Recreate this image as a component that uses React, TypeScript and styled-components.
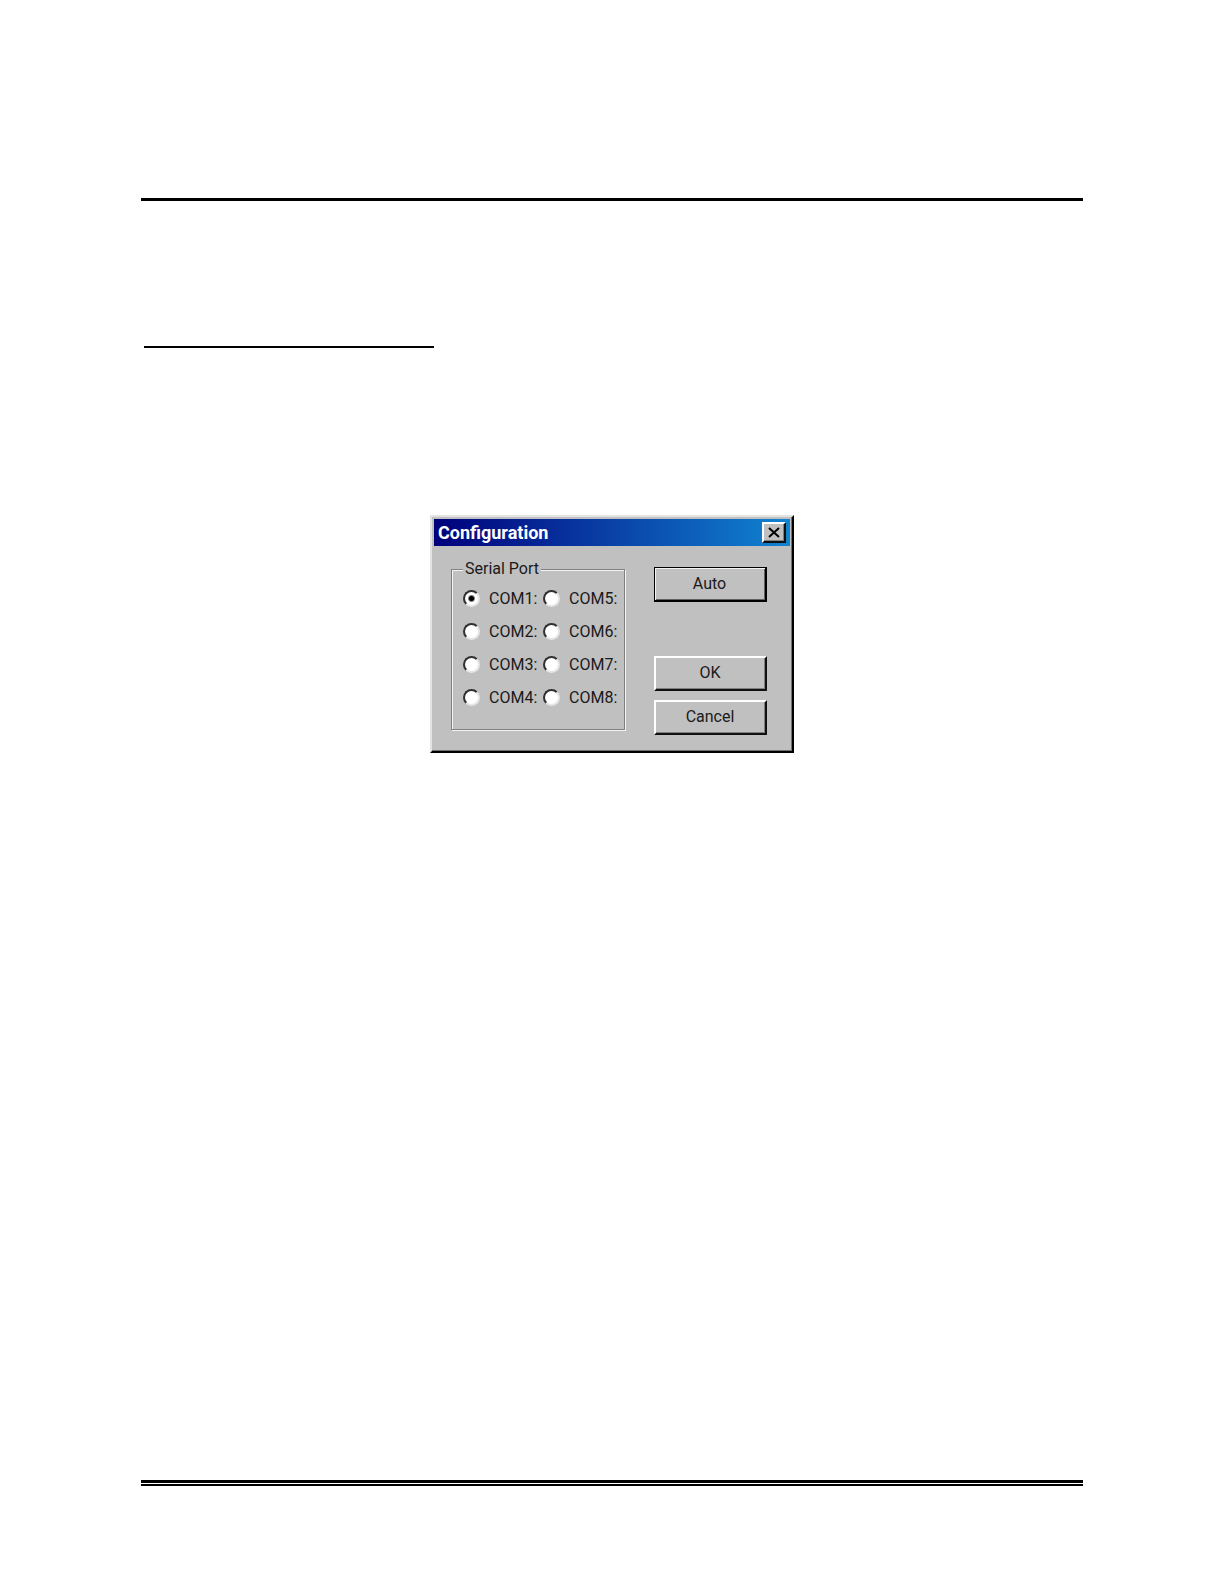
import React, { useState } from "react";
import styled, { createGlobalStyle, css } from "styled-components";

const GlobalStyle = createGlobalStyle`
  *, *::before, *::after { box-sizing: border-box; }
  body {
    margin: 0;
    background: #fff;
    color: #1a1a1a;
    font: 16px/20px Roboto, "Liberation Sans", sans-serif;
  }
`;

const Page = styled.main`
  display: flex;
  flex-direction: column;
  min-height: 100vh;
  padding: 198px 141px 98px;
`;

const HeaderRule = styled.hr`
  width: 100%;
  height: 3px;
  margin: 0 0 145px;
  border: 0;
  background: #000;
`;

const SectionRule = styled.hr`
  width: 290px;
  height: 2px;
  margin: 0 0 167px 3px;
  border: 0;
  background: #000;
`;

const FooterRule = styled.hr`
  width: 100%;
  height: 6px;
  margin: auto 0 0;
  border: solid #000;
  border-width: 3px 0 2px;
`;

const Dialog = styled.section`
  align-self: center;
  width: 364px;
  padding: 2px 1px 1px 2px;
  border: 2px solid;
  border-color: #e4e4e4 #000 #000 #e4e4e4;
  background: #c0c0c0;
  box-shadow: inset -1px -1px #707070;
`;

const TitleBar = styled.header`
  display: flex;
  align-items: center;
  justify-content: space-between;
  height: 27px;
  margin-right: 1px;
  padding: 0 4px;
  background: linear-gradient(90deg, #00007b, #0a48ac 55%, #1084d0);
`;

const Title = styled.h1`
  margin: 0;
  color: #fff;
  font-size: 18px;
  line-height: 20px;
  font-weight: 700;
`;

const raised = css`
  border: 2px solid;
  border-color: #fff #101010 #101010 #fff;
  background: #c0c0c0;
  box-shadow: inset -1px -1px #808080;
`;

const CloseButton = styled.button`
  ${raised}
  display: grid;
  place-items: center;
  width: 24px;
  height: 21px;
  padding: 0 1px 1px 0;
`;

const Body = styled.form`
  display: flex;
  align-items: flex-start;
  gap: 29px;
  padding: 13px 24px 15px 17px;
`;

const PortGroup = styled.fieldset`
  flex: 0 0 174px;
  height: 171px;
  min-width: 0;
  margin: 0;
  padding: 3px 0 0 11px;
  border: 1px solid #808080;
  box-shadow: 1px 1px #f4f4f4, inset 1px 1px #f4f4f4;
`;

const GroupName = styled.legend`
  padding: 0 2px;
  background: #c0c0c0;
`;

const Ports = styled.div`
  display: grid;
  grid-template-columns: repeat(2, 80px);
  grid-template-rows: repeat(4, 33px);
  grid-auto-flow: column;
`;

const Port = styled.label`
  display: flex;
  align-items: center;
  gap: 9px;
`;

const Radio = styled.input`
  appearance: none;
  flex: none;
  width: 17px;
  height: 17px;
  margin: 0;
  border: 2px solid;
  border-color: #303030 #e6e6e6 #e6e6e6 #303030;
  border-radius: 50%;
  background: #fff;

  &:checked {
    background: radial-gradient(circle, #000 0 2px, #fff 4px);
  }
`;

const Actions = styled.div`
  display: flex;
  flex: 1;
  flex-direction: column;
  gap: 9px;
  padding-top: 8px;
`;

const ActionButton = styled.button<{ $primary?: boolean }>`
  ${raised}
  height: 35px;
  padding: 0 1px 1px 0;
  color: inherit;
  font: inherit;
  ${({ $primary }) =>
    $primary &&
    css`
      margin-bottom: 45px;
      padding-bottom: 0;
      border-color: #000;
      box-shadow: inset 1px 1px #f4f4f4, inset -1px -1px #606060;
      border-width: 1px 2px 2px 1px;
    `}
`;

const PORTS = [1, 2, 3, 4, 5, 6, 7, 8].map((n) => `COM${n}:`);

export default function App() {
  const [port, setPort] = useState(PORTS[0]);

  return (
    <>
      <GlobalStyle />
      <Page>
        <HeaderRule />
        <SectionRule />
        <Dialog role="dialog" aria-labelledby="dialog-title">
          <TitleBar>
            <Title id="dialog-title">Configuration</Title>
            <CloseButton type="button" aria-label="Close">
              <svg width="12" height="11" viewBox="0 0 12 11" aria-hidden="true">
                <path d="M1 1 11 10M11 1 1 10" stroke="#000" strokeWidth="2" />
              </svg>
            </CloseButton>
          </TitleBar>
          <Body onSubmit={(event) => event.preventDefault()}>
            <PortGroup>
              <GroupName>Serial Port</GroupName>
              <Ports>
                {PORTS.map((name) => (
                  <Port key={name}>
                    <Radio
                      type="radio"
                      name="port"
                      value={name}
                      checked={port === name}
                      onChange={() => setPort(name)}
                    />
                    {name}
                  </Port>
                ))}
              </Ports>
            </PortGroup>
            <Actions>
              <ActionButton type="button" $primary>
                Auto
              </ActionButton>
              <ActionButton type="submit">OK</ActionButton>
              <ActionButton type="button">Cancel</ActionButton>
            </Actions>
          </Body>
        </Dialog>
        <FooterRule />
      </Page>
    </>
  );
}
